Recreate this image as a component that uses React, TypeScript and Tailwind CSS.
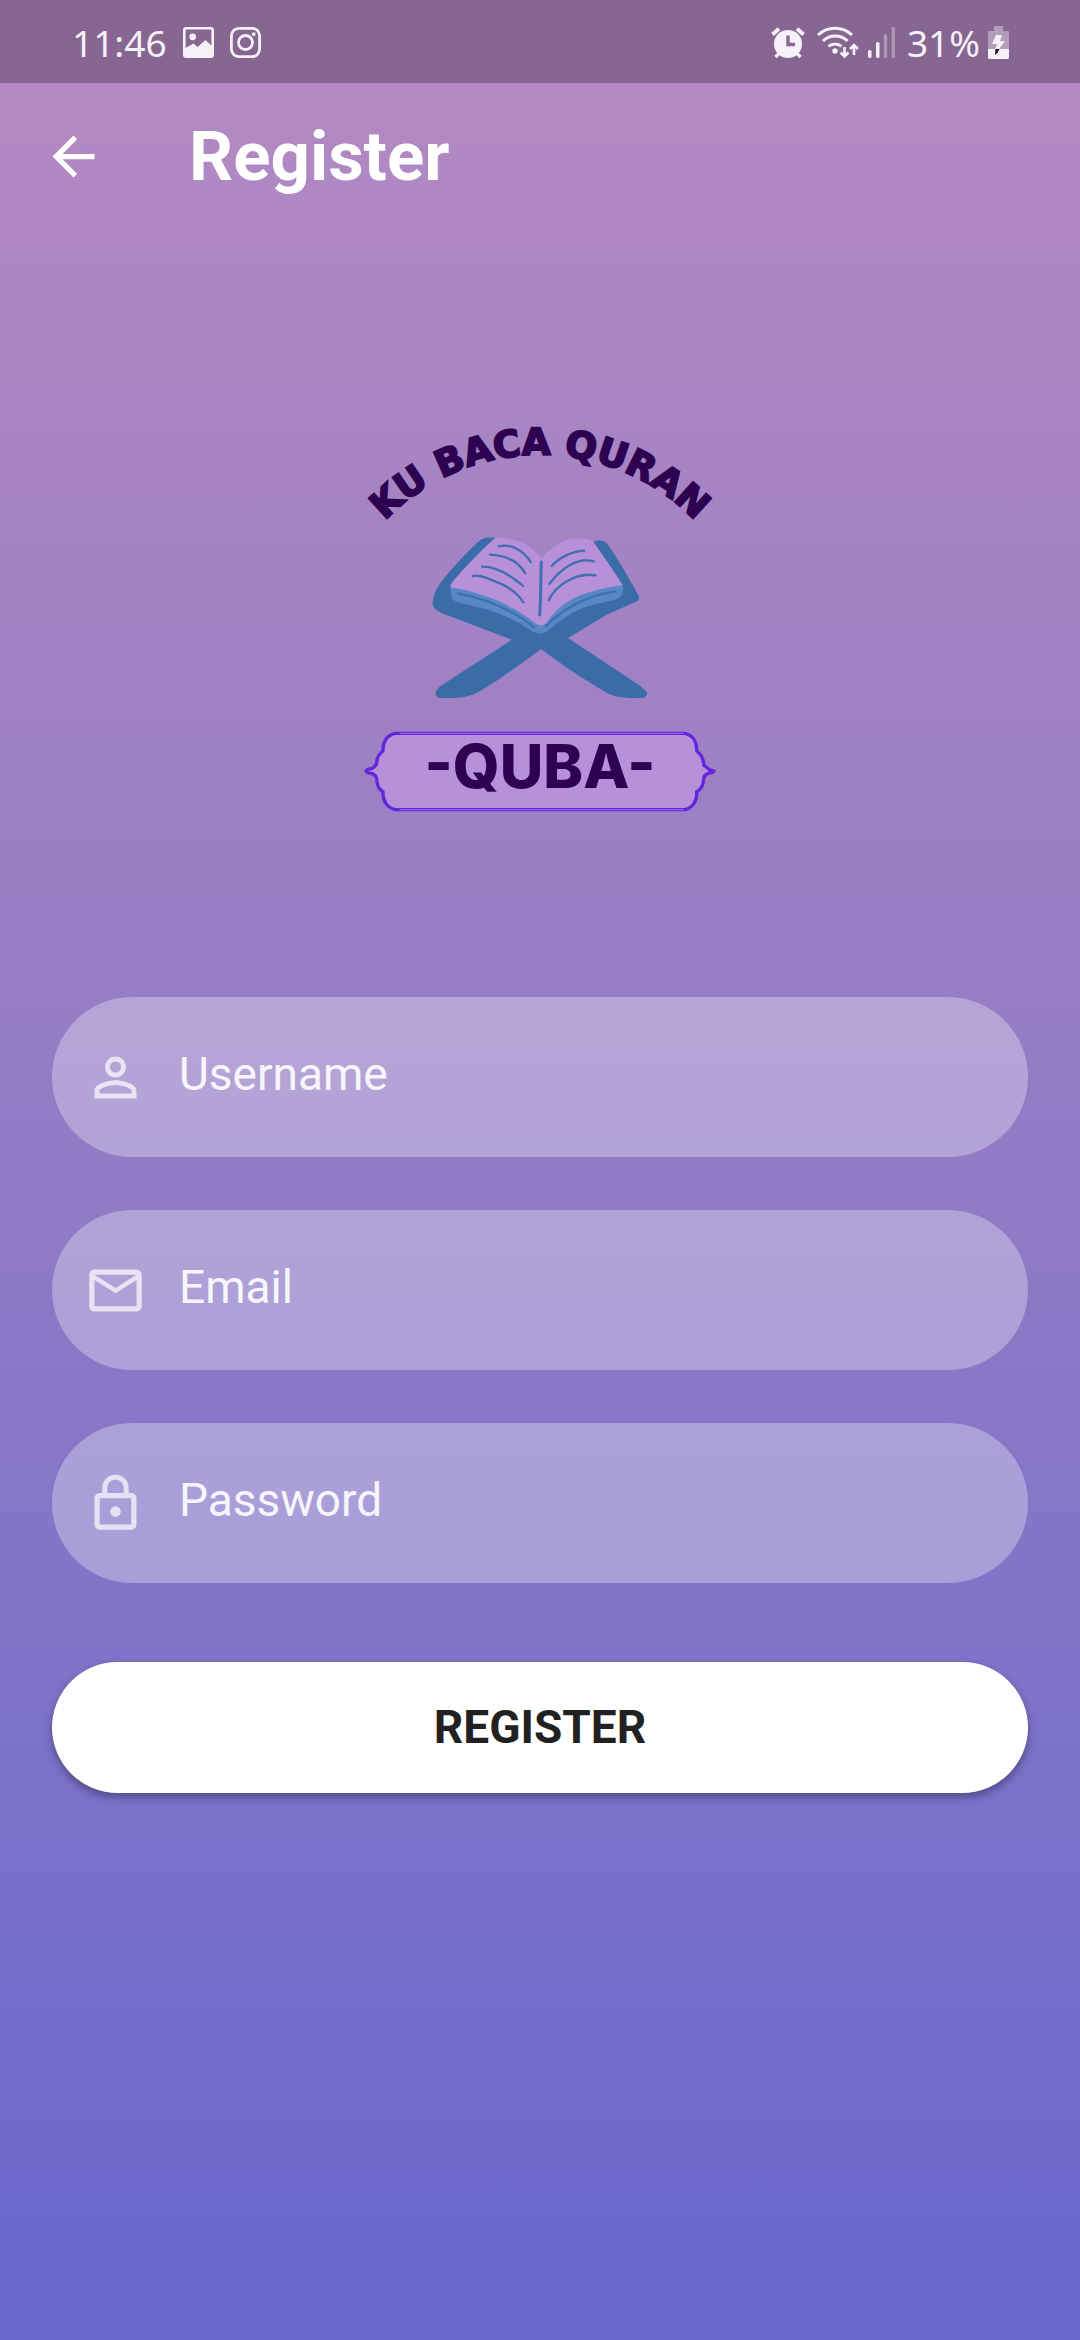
import React from "react";
import { MdArrowBack, MdLockOutline, MdMailOutline, MdPersonOutline } from "react-icons/md";
import type { IconType } from "react-icons";

function PictureIcon() {
  return (
    <svg viewBox="0 0 31 31" className="h-[31px] w-[31px]" aria-hidden="true">
      <rect x="1.3" y="1.3" width="28.4" height="28.4" rx="2" fill="none" stroke="currentColor" strokeWidth="2.6" />
      <circle cx="9.7" cy="9.8" r="3.4" fill="currentColor" />
      <path d="M1.500 21.500 L10.500 16.500 L14.500 20 L22.500 13 L29.500 19.500 V29.500 H1.500Z" fill="currentColor" />
    </svg>
  );
}

function InstagramIcon() {
  return (
    <svg viewBox="0 0 31 31" className="h-[31px] w-[31px]" fill="none" stroke="currentColor" strokeWidth="2.8" aria-hidden="true">
      <rect x="1.4" y="1.4" width="28.2" height="28.2" rx="7.5" />
      <circle cx="15.5" cy="15.5" r="7" />
      <circle cx="23.7" cy="7.2" r="1.9" fill="currentColor" stroke="none" />
    </svg>
  );
}

function AlarmIcon() {
  return (
    <svg viewBox="0 0 34 32" className="h-8 w-[34px]" aria-hidden="true">
      <g stroke="currentColor" fill="none">
        <path d="M1.5 7.5 L8 1.8 M26 1.8 L32.5 7.5" strokeWidth="4" />
        <path d="M8.5 26 L4.5 30 M25.5 26 L29.5 30" strokeWidth="3.4" />
      </g>
      <circle cx="17" cy="17" r="14" fill="currentColor" />
      <path d="M17 8.5 V17.5 H24" fill="none" stroke="#8a6791" strokeWidth="3.4" />
    </svg>
  );
}

function WifiIcon() {
  return (
    <svg viewBox="0 0 43 33" className="h-[33px] w-[43px]" fill="none" stroke="currentColor" strokeWidth="3" aria-hidden="true">
      <path d="M1 9 A24.500 24.500 0 0 1 35 9" />
      <path d="M6 15 A17.500 17.500 0 0 1 30.500 15" />
      <path d="M11.500 20.300 A10 10 0 0 1 24.500 20.300" />
      <circle cx="18" cy="25" r="2.700" fill="currentColor" stroke="none" />
      <path d="M27.500 21 V30 M23.600 26.500 L27.500 30.500 L31.400 26.500 M37 29 V20 M33 23 L37 19 L41 23" strokeWidth="2.600" />
    </svg>
  );
}

function SignalIcon() {
  return (
    <svg viewBox="0 0 27 31" className="h-[31px] w-[27px]" fill="currentColor" aria-hidden="true">
      <rect x="0" y="23" width="3.500" height="8" rx="1.500" />
      <rect x="8" y="15" width="3.500" height="16" rx="1.500" />
      <rect x="15.700" y="7" width="3.500" height="24" rx="1.500" opacity=".35" />
      <rect x="23.500" y="0" width="3.500" height="31" rx="1.500" opacity=".35" />
    </svg>
  );
}

function BatteryIcon() {
  return (
    <svg viewBox="0 0 21 33" className="h-[33px] w-[21px]" aria-hidden="true">
      <path d="M6 0 H15 V5 H20 Q21 5 21 6 V23 H0 V6 Q0 5 1 5 H6Z" fill="currentColor" opacity=".4" />
      <path d="M0 23 H21 V31.500 Q21 33 19.500 33 H1.500 Q0 33 0 31.500Z" fill="currentColor" />
      <path d="M8 9 H14 L12 15 H17 L11 23 H7 L9 18 H4Z" fill="currentColor" />
      <path d="M7.500 23 H11.500 Q10 27 7 29Z" fill="#111" />
    </svg>
  );
}

function StatusBar() {
  return (
    <div className="flex h-[83px] items-center justify-between bg-black/25 pt-0.5 pr-[71px] pl-[72px] font-['Noto_Sans',sans-serif] text-[37px] leading-none text-[#f6f1f8]">
      <div className="flex items-center gap-4">
        <span>11:46</span>
        <PictureIcon />
        <InstagramIcon />
      </div>
      <div className="flex items-center">
        <AlarmIcon />
        <span className="ml-3">
          <WifiIcon />
        </span>
        <span className="ml-2">
          <SignalIcon />
        </span>
        <span className="ml-3">31%</span>
        <span className="ml-2">
          <BatteryIcon />
        </span>
      </div>
    </div>
  );
}

function Logo() {
  return (
    <svg viewBox="0 0 380 410" className="h-[410px] w-[380px]" role="img" aria-label="Ku Baca Quran, Quba">
      <defs>
        <path id="arch" d="M25 122 A215 215 0 0 1 355 122" />
      </defs>
      <text
        fill="#2d0250"
        stroke="#2d0250"
        strokeWidth="2"
        fontFamily="'DejaVu Sans', sans-serif"
        fontWeight="700"
        fontSize="37"
        textAnchor="middle"
      >
        <textPath href="#arch" startOffset="50%">
          KU BACA QURAN
        </textPath>
      </text>

      <g transform="translate(60 110) scale(.33333)" strokeLinecap="round">
        <path
          fill="#3a6ca8"
          d="M255 54 C235 51 222 53 210 61 C175 92 130 140 93 186 C76 210 68 232 68 252 C68 262 76 270 96 280 L306 359 L95 496 C79 508 74 518 77 526 C82 534 90 535 110 534 C150 534 178 531 205 516 C270 478 335 430 393 387 C450 430 530 484 590 518 C615 532 645 534 690 534 C708 534 716 524 708 514 C700 505 690 497 670 484 L474 354 L590 284 L684 242 C689 238 688 233 685 226 C660 180 625 120 595 76 C588 65 578 61 565 61 L548 66 L500 150 L395 200 L300 150Z"
        />
        <path fill="#5787c4" d="M122 200 C121 222 124 236 134 242 C150 250 180 254 215 264 C275 280 325 305 366 334 C385 344 398 344 412 334 C450 300 490 272 540 257 C575 247 610 243 628 233 C639 225 641 212 638 194Z" />
        <path
          fill="#b790d9"
          d="M256 54 C305 50 355 66 395 116 C435 64 490 42 548 62 C580 108 610 150 638 195 C575 205 510 220 470 247 C445 266 425 285 410 308 C400 318 385 318 374 309 C320 262 225 218 120 202 C122 190 130 182 140 171 C180 125 220 85 256 54Z"
        />
        <g fill="none" stroke="#3f6fae" strokeWidth="7">
          <path d="M394 126 C392 180 393 230 389 285" strokeWidth="9" />
          <path d="M266 79 C305 70 340 92 362 126" />
          <path d="M240 104 C285 106 325 124 346 160" />
          <path d="M216 140 C265 140 305 168 339 198" />
          <path d="M189 168 C205 164 220 170 240 178 C280 192 322 216 340 247" />
          <path d="M425 138 C448 112 485 94 522 92" />
          <path d="M418 191 C455 145 500 110 551 124" />
          <path d="M416 241 C435 200 495 155 557 166" />
          <path d="M143 221 C225 235 310 270 372 322" />
          <path d="M408 318 C455 270 530 225 614 215" />
        </g>
      </g>

      <g transform="translate(0 305) scale(.33333)" strokeLinejoin="round" strokeLinecap="round">
        <path
          fill="#b790d9"
          stroke="#6426dd"
          strokeWidth="10"
          d="M135 55 H1005 C1028 60 1041 80 1040 108 C1054 118 1061 132 1062 152 C1070 154 1073 161 1078 164 L1092 168 C1088 176 1080 172 1072 176 C1064 180 1061 184 1061 192 C1060 210 1052 224 1040 230 C1042 258 1028 278 1005 284 H135 C112 278 97 258 99 230 C87 224 80 208 80 190 C78 182 74 180 68 176 C62 172 52 178 48 168 C52 159 62 164 70 158 C78 153 80 149 80 142 C81 128 88 116 99 108 C97 80 112 60 135 55Z"
        />
        <path fill="none" stroke="#a06cf0" strokeWidth="3" d="M150 55 H1000 M150 284 H1000" />
      </g>
      <text x="190" y="378" fill="#2d0250" fontFamily="Inter, sans-serif" fontWeight="800" fontSize="60" textAnchor="middle">
        -QUBA-
      </text>
    </svg>
  );
}

type FieldProps = { id: string; label: string; type: string; Icon: IconType };

function Field({ id, label, type, Icon }: FieldProps) {
  return (
    <label htmlFor={id} className="flex h-40 items-center rounded-full bg-white/30 pr-8 pl-8">
      <Icon className="h-[63px] w-[63px] shrink-0 text-white/70" aria-hidden="true" />
      <input
        id={id}
        type={type}
        placeholder={label}
        aria-label={label}
        className="ml-8 h-full min-w-0 flex-1 bg-transparent pb-1.5 text-[46px] text-white/90 outline-none placeholder:text-white/90"
      />
    </label>
  );
}

export default function App() {
  return (
    <div className="flex min-h-screen flex-col bg-linear-to-b from-[#b58ac2] via-[#917bc5] to-[#6867ce] font-[Roboto,sans-serif]">
      <StatusBar />
      <header className="flex h-[147px] items-center pl-[42px]">
        <button type="button" aria-label="Back" className="text-white">
          <MdArrowBack className="h-[63px] w-[63px]" />
        </button>
        <h1 className="ml-[84px] text-[69px] leading-none font-bold text-white">Register</h1>
      </header>
      <main className="flex flex-col px-[52px] pt-[180px]">
        <div className="flex justify-center">
          <Logo />
        </div>
        <form className="mt-[177px] flex flex-col" onSubmit={(e) => e.preventDefault()}>
          <div className="flex flex-col gap-[53px]">
            <Field id="username" label="Username" type="text" Icon={MdPersonOutline} />
            <Field id="email" label="Email" type="email" Icon={MdMailOutline} />
            <Field id="password" label="Password" type="password" Icon={MdLockOutline} />
          </div>
          <button
            type="submit"
            className="mt-[79px] h-[131px] rounded-full bg-white text-[46px] font-bold text-[#212121] shadow-[0_4px_8px_rgba(0,0,0,0.35)]"
          >
            REGISTER
          </button>
        </form>
      </main>
    </div>
  );
}
